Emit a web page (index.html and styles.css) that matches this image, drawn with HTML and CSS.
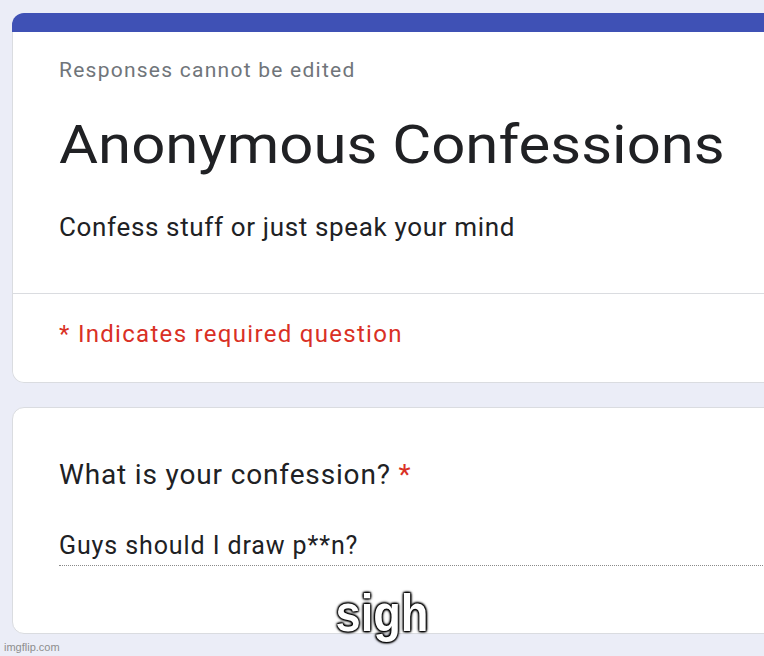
FILE: index.html
```html
<!DOCTYPE html>
<html lang="en">
<head>
    <meta charset="UTF-8">
    <meta name="viewport" content="width=device-width, initial-scale=1.0">
    <title>Anonymous Confessions</title>
    <link rel="stylesheet" href="styles.css">
</head>
<body>
    <div class="form">
        <div class="header-card">
            <div class="card-accent"></div>
            <div class="card-body">
                <div class="intro">
                    <p class="notice">Responses cannot be edited</p>
                    <h1 class="title">Anonymous Confessions</h1>
                    <p class="description">Confess stuff or just speak your mind</p>
                </div>
                <div class="required-note">* Indicates required question</div>
            </div>
        </div>

        <div class="card question">
            <div class="question-title">What is your confession? <span class="asterisk">*</span></div>
            <div class="answer">Guys should I draw p**n?</div>
        </div>
    </div>

    <div class="caption">sigh</div>
    <div class="watermark">imgflip.com</div>
</body>
</html>
```

FILE: styles.css
```css
body {
    margin: 0;
    background-color: #ebedf7;
    font-family: Roboto, 'Liberation Sans', Arial, sans-serif;
    color: #202124;
    overflow: hidden;
    height: 656px;
    position: relative;
}
.form {
    width: 820px;
    padding: 13px 0 0 12px;
}
.header-card {
    border-radius: 12px;
    overflow: hidden;
}
.card-accent {
    height: 19px;
    background-color: #3f51b5;
}
.card-body {
    background-color: #fff;
    border: 1px solid #dadce0;
    border-top: none;
    border-radius: 0 0 12px 12px;
}
.intro {
    padding: 24px 0 49px 46px;
    border-bottom: 1px solid #dadce0;
}
.notice {
    margin: 0;
    font-size: 21px;
    line-height: 28px;
    letter-spacing: 1.25px;
    color: #70757a;
}
.title {
    display: block;
    margin: 29px 0 0;
    font-size: 53px;
    font-weight: 400;
    line-height: 64px;
    white-space: nowrap;
    transform: scaleX(1.13);
    transform-origin: left center;
}
.description {
    margin: 33px 0 0;
    font-size: 26px;
    line-height: 34px;
    letter-spacing: 0.65px;
}
.required-note {
    padding: 24px 0 32px 46px;
    font-size: 24px;
    line-height: 32px;
    letter-spacing: 1.3px;
    color: #d93025;
}
.card {
    background-color: #fff;
    border: 1px solid #dadce0;
    border-radius: 12px;
}
.question {
    margin-top: 24px;
    padding: 49px 0 67px 46px;
}
.question-title {
    font-size: 28px;
    line-height: 36px;
    letter-spacing: 0.85px;
}
.asterisk {
    color: #d93025;
}
.answer {
    margin-top: 37px;
    padding-bottom: 3px;
    font-size: 25px;
    line-height: 32px;
    letter-spacing: 0.9px;
    border-bottom: 1px dotted #8a8a8a;
}
.caption {
    position: absolute;
    left: 0;
    width: 764px;
    top: 587px;
    text-align: center;
    font-family: 'Liberation Sans', Arial, sans-serif;
    font-weight: bold;
    font-size: 52px;
    line-height: 52px;
    color: #fff;
    transform: scaleX(0.87);
    text-shadow: 1px 1px 2px #000, -1px -1px 2px #000, 1px -1px 2px #000, -1px 1px 2px #000, 0 0 4px #000;
}
.watermark {
    position: absolute;
    left: 4px;
    top: 640px;
    font-family: 'Liberation Sans', Arial, sans-serif;
    font-size: 11px;
    line-height: 14px;
    color: #8e8e8e;
}
```
